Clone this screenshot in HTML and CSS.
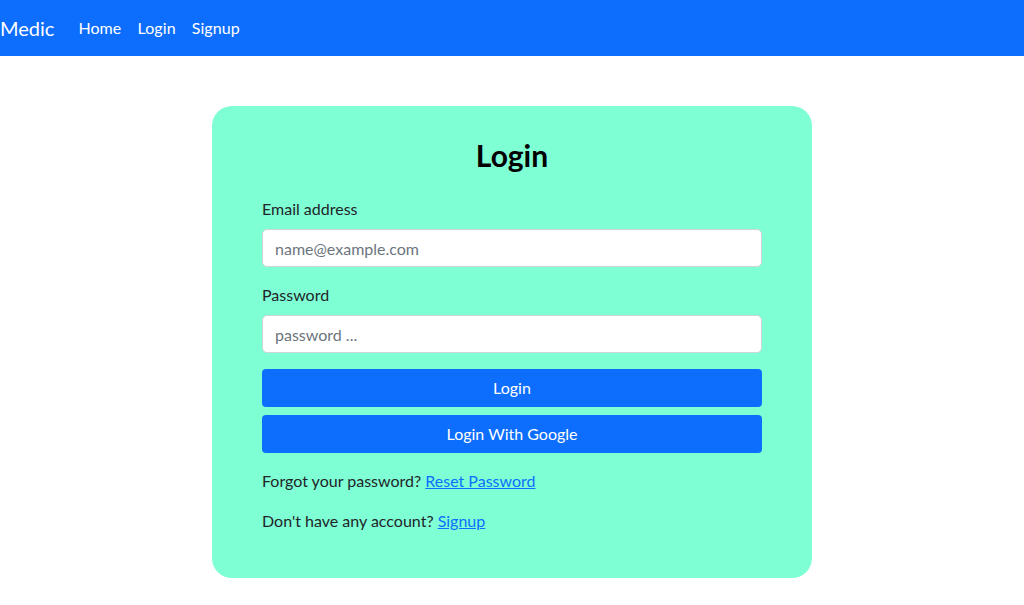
FILE: index.html
```html
<!DOCTYPE html>
<html lang="en">

<head>
    <meta charset="UTF-8">
    <meta name="viewport" content="width=device-width, initial-scale=1.0">
    <title>Medic - Login</title>
    <link rel="stylesheet" href="styles.css">
</head>

<body>
    <nav class="navbar">
        <a class="brand" href="#">Medic</a>
        <ul class="nav">
            <li><a href="#">Home</a></li>
            <li><a href="#">Login</a></li>
            <li><a href="#">Signup</a></li>
        </ul>
    </nav>
    <div class="login-box">
        <h3 class="title">Login</h3>
        <form>
            <div class="field">
                <label for="email">Email address</label>
                <input type="email" id="email" placeholder="name@example.com">
            </div>
            <div class="field">
                <label for="password">Password</label>
                <input type="password" id="password" placeholder="password ...">
            </div>
            <button type="button" class="btn">Login</button>
            <button type="button" class="btn">Login With Google</button>
        </form>
        <p>Forgot your password? <a href="#">Reset Password</a></p>
        <p>Don't have any account? <a href="#">Signup</a></p>
    </div>
</body>

</html>
```

FILE: styles.css
```css
* {
    box-sizing: border-box;
}

body {
    margin: 0;
    font-family: Lato, "Noto Sans", sans-serif;
    font-size: 16px;
    line-height: 1.5;
    color: #212529;
    background-color: #fff;
}

a {
    color: #0d6efd;
}

.navbar {
    display: flex;
    align-items: center;
    height: 56px;
    background-color: #0d6efd;
}

.navbar .brand {
    font-size: 20px;
    color: #fff;
    text-decoration: none;
    margin-right: 16px;
}

.nav {
    display: flex;
    margin: 0;
    padding: 0;
}

.nav li {
    list-style: none;
}

.nav a {
    display: block;
    padding: 8px;
    color: #fff;
    text-decoration: none;
    letter-spacing: 0.1px;
}

.login-box {
    width: 600px;
    margin: 50px auto 0;
    padding: 31px 50px 29px;
    background-color: aquamarine;
    border-radius: 20px;
}

.title {
    margin: 0 0 24px;
    text-align: center;
    font-size: 30px;
    font-weight: 700;
    line-height: 1.2;
    color: #000;
}

.field {
    margin-bottom: 16px;
}

.field label {
    display: block;
    margin-bottom: 8px;
}

.field input {
    display: block;
    width: 100%;
    height: 38px;
    padding: 6px 12px;
    font: inherit;
    color: #212529;
    border: 1px solid #ced4da;
    border-radius: 5px;
    background-color: #fff;
}

.field input::placeholder {
    color: #6c757d;
}

.btn {
    display: block;
    width: 100%;
    height: 38px;
    margin-bottom: 8px;
    font: inherit;
    color: #fff;
    background-color: #0d6efd;
    border: 0;
    border-radius: 4px;
}

form {
    margin-bottom: 16px;
}

p {
    margin: 0 0 16px;
}
```
